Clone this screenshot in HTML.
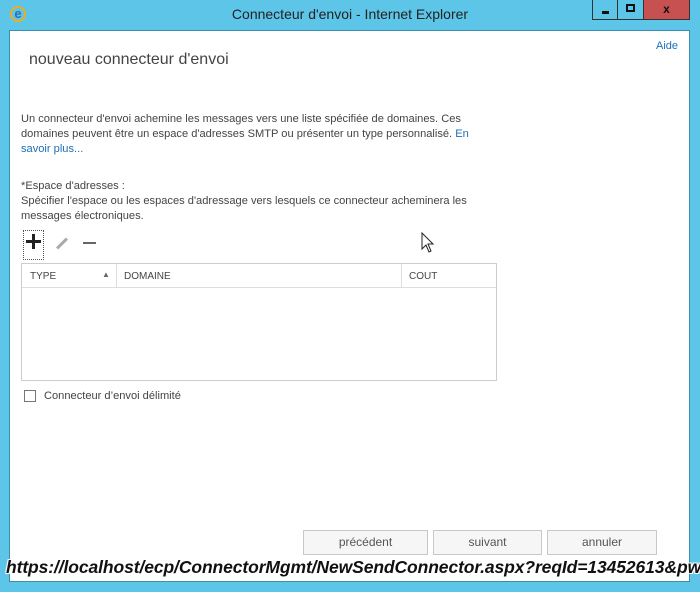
<!DOCTYPE html>
<html><head><meta charset="utf-8"><style>
*{margin:0;padding:0;box-sizing:border-box}
body{width:700px;height:592px;overflow:hidden;background:#5dc5e8;font-family:"Liberation Sans",sans-serif;position:relative;color:#444}
.a{position:absolute}
#win{left:9px;top:30px;width:681px;height:552px;background:#fff;border:1px solid #3a8fb0}
.t{font-size:11.1px;line-height:15px;color:#444;white-space:nowrap}
.btn{position:absolute;top:530px;height:25px;border:1px solid #c8c8c8;background:#f6f6f6;font-size:12px;color:#555;text-align:center;line-height:23px}
</style></head><body>
<div class="a" style="left:10px;top:6px;width:16px;height:16px;border-radius:50%;border:2px solid #e8b020;color:#2b6fc0;font-size:13px;line-height:11px;text-align:center;font-weight:bold">e</div>
<div class="a" style="left:0;width:700px;top:6px;text-align:center;font-size:14px;color:#222">Connecteur d'envoi - Internet Explorer</div>
<div class="a" style="left:592px;top:0;width:26px;height:20px;border:1px solid #333;border-top:none;background:#5dc5e8"><div class="a" style="left:9px;top:11px;width:7px;height:3px;background:#111"></div></div>
<div class="a" style="left:618px;top:0;width:26px;height:20px;border:1px solid #333;border-top:none;border-left:none;background:#5dc5e8"><div class="a" style="left:8px;top:4px;width:9px;height:8px;border:2px solid #111"></div></div>
<div class="a" style="left:644px;top:0;width:46px;height:20px;background:#c75050;border:1px solid #333;border-top:none;border-left:none;color:#111;font-weight:bold;font-size:12px;text-align:center;line-height:18px">x</div>
<div id="win" class="a"></div>
<div class="a" style="left:656px;top:40px;font-size:11px;color:#1e6fb8">Aide</div>
<div class="a" style="left:29px;top:51px;font-size:16px;color:#444">nouveau connecteur d'envoi</div>
<div class="a t" style="left:21px;top:112px">Un connecteur d'envoi achemine les messages vers une liste spécifiée de domaines. Ces<br>domaines peuvent être un espace d'adresses SMTP ou présenter un type personnalisé. <span style="color:#1e6fb8">En</span><br><span style="color:#1e6fb8">savoir plus...</span></div>
<div class="a t" style="left:21px;top:179px">*Espace d'adresses :<br>Spécifier l'espace ou les espaces d'adressage vers lesquels ce connecteur acheminera les<br>messages électroniques.</div>
<div class="a" style="left:23px;top:230px;width:21px;height:30px;border:1px dotted #555"></div>
<div class="a" style="left:26px;top:240px;width:15px;height:3px;background:#222"></div>
<div class="a" style="left:32px;top:234px;width:3px;height:15px;background:#222"></div>
<div class="a" style="left:55px;top:242px;width:14px;height:3px;background:#aaa;transform:rotate(-45deg)"></div>
<div class="a" style="left:83px;top:242px;width:13px;height:2px;background:#666"></div>
<svg class="a" style="left:421px;top:232px" width="14" height="22" viewBox="0 0 14 22"><path d="M1 1 L1 17 L5 13 L8 20 L10 19 L7 12 L12 12 Z" fill="#fff" stroke="#222" stroke-width="1"/></svg>
<div class="a" style="left:21px;top:263px;width:476px;height:118px;border:1px solid #ccc"></div>
<div class="a" style="left:22px;top:287px;width:474px;height:1px;background:#ddd"></div>
<div class="a" style="left:116px;top:264px;width:1px;height:23px;background:#ddd"></div>
<div class="a" style="left:401px;top:264px;width:1px;height:23px;background:#ddd"></div>
<div class="a t" style="left:30px;top:269px;font-size:10px">TYPE</div>
<div class="a" style="left:102px;top:270px;font-size:8px;color:#666">▲</div>
<div class="a t" style="left:124px;top:269px;font-size:10px">DOMAINE</div>
<div class="a t" style="left:409px;top:269px;font-size:10px">COUT</div>
<div class="a" style="left:24px;top:390px;width:12px;height:12px;border:1px solid #777"></div>
<div class="a t" style="left:44px;top:389px">Connecteur d’envoi délimité</div>
<div class="btn" style="left:303px;width:125px">précédent</div>
<div class="btn" style="left:433px;width:109px">suivant</div>
<div class="btn" style="left:547px;width:110px">annuler</div>
<div class="a" style="left:0;top:555px;width:700px;height:26px;overflow:hidden"><div class="a" style="left:6px;top:2px;font-size:17.5px;font-weight:bold;font-style:italic;color:#111;white-space:nowrap;text-shadow:-1px -1px 0 #fff,1px -1px 0 #fff,-1px 1px 0 #fff,1px 1px 0 #fff;letter-spacing:-0.1px">https://localhost/ecp/ConnectorMgmt/NewSendConnector.aspx?reqId=13452613&amp;pwm</div></div>
</body></html>
